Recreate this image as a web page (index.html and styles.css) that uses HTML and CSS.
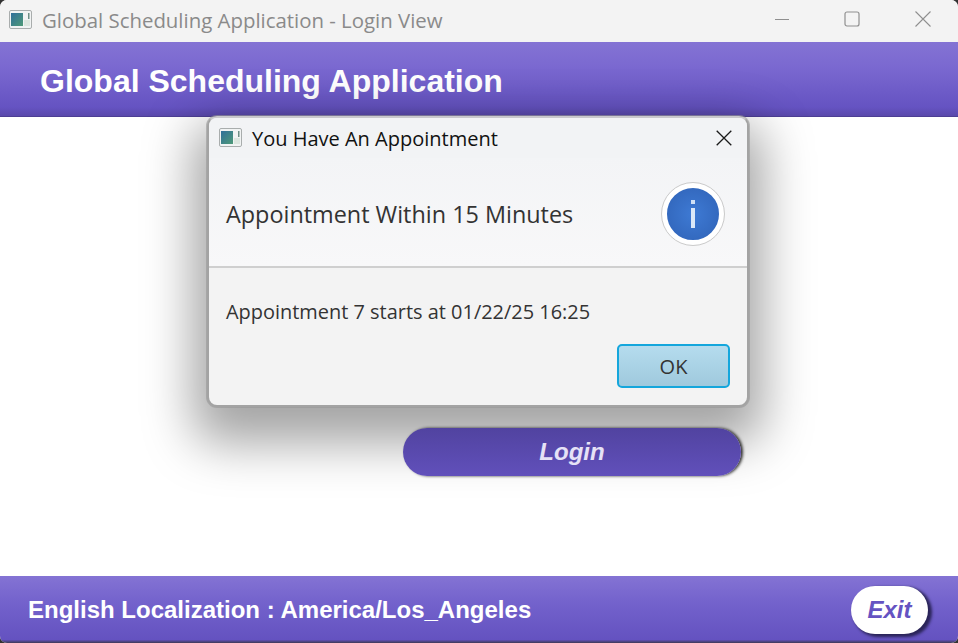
FILE: index.html

```html
<!DOCTYPE html>
<html lang="en">
<head>
    <meta charset="UTF-8">
    <title>Global Scheduling Application - Login View</title>
    <link rel="stylesheet" href="styles.css">
</head>
<body>

    <div class="window">
        <div class="titlebar">
            <svg class="app-icon" width="23" height="19" viewBox="0 0 23 19">
                <defs>
                    <linearGradient id="iconFill" x1="0" y1="0" x2="1" y2="1">
                        <stop offset="0" stop-color="#2f6f9a"/>
                        <stop offset="1" stop-color="#4f9a78"/>
                    </linearGradient>
                </defs>
                <rect x="0.5" y="0.5" width="22" height="18" rx="1.5" fill="#f1f3f3" stroke="#a9adad"/>
                <rect x="2" y="3" width="12" height="13" fill="url(#iconFill)"/>
                <rect x="15" y="10" width="6" height="6" fill="#dce6df"/>
                <rect x="19" y="3" width="1.5" height="6" fill="#6f8f86"/>
            </svg>
            <span class="window-title">Global Scheduling Application - Login View</span>
            <div class="window-controls">
                <svg width="16" height="16" viewBox="0 0 16 16"><path d="M2 8.5H17" stroke="#8f8f8f" fill="none"/></svg>
                <svg width="16" height="16" viewBox="0 0 16 16"><rect x="1" y="1" width="14" height="14" rx="2" stroke="#8f8f8f" stroke-width="1.2" fill="none"/></svg>
                <svg width="16" height="16" viewBox="0 0 16 16"><path d="M0.5 0.5L15.5 15.5M15.5 0.5L0.5 15.5" stroke="#8f8f8f" stroke-width="1.1" fill="none"/></svg>
            </div>
        </div>

        <header class="banner">
            <h1>Global Scheduling Application</h1>
        </header>

        <main class="content">
            <button class="login-btn">Login</button>
        </main>

        <footer class="footer">
            <span class="locale">English Localization : America/Los_Angeles</span>
            <button class="exit-btn">Exit</button>
        </footer>
    </div>

    <div class="dialog">
        <div class="dialog-title">
            <svg class="app-icon" width="23" height="19" viewBox="0 0 23 19">
                <rect x="0.5" y="0.5" width="22" height="18" rx="1.5" fill="#f1f3f3" stroke="#a9adad"/>
                <rect x="2" y="3" width="12" height="13" fill="url(#iconFill)"/>
                <rect x="15" y="10" width="6" height="6" fill="#dce6df"/>
                <rect x="19" y="3" width="1.5" height="6" fill="#6f8f86"/>
            </svg>
            <span class="dialog-name">You Have An Appointment</span>
            <svg class="dialog-close" width="16" height="16" viewBox="0 0 16 16"><path d="M0.7 0.7L15.3 15.3M15.3 0.7L0.7 15.3" stroke="#1a1a1a" stroke-width="1.3" fill="none"/></svg>
        </div>
        <div class="dialog-header">
            <span class="dialog-heading">Appointment Within 15 Minutes</span>
            <div class="info-icon"><span class="info-dot"></span><span class="info-bar"></span></div>
        </div>
        <div class="dialog-body">
            <p>Appointment 7 starts at 01/22/25 16:25</p>
            <div class="dialog-actions">
                <button class="ok-btn">OK</button>
            </div>
        </div>
    </div>

</body>
</html>
```

FILE: styles.css

```css
body {
    margin: 0;
    background: #333;
    font-family: "Open Sans", "Noto Sans", sans-serif;
    overflow: hidden;
}
button {
    font-family: inherit;
    cursor: pointer;
}
.window {
    display: flex;
    flex-direction: column;
    width: 958px;
    height: 643px;
    background: #fff;
    border-radius: 7px;
    overflow: hidden;
}
.titlebar {
    display: flex;
    align-items: center;
    height: 42px;
    padding: 0 27px 2px 9px;
    background: #f3f3f3;
    box-sizing: border-box;
}
.app-icon {
    flex-shrink: 0;
    margin-top: -2px;
}
.window-title {
    margin-left: 10px;
    font-size: 20.4px;
    color: #8a8a8a;
}
.window-controls {
    display: flex;
    gap: 55px;
    margin: -2px 0 0 auto;
}
.banner {
    display: flex;
    align-items: center;
    height: 75px;
    padding-left: 40px;
    box-sizing: border-box;
    background: linear-gradient(#8473d4, #7a68d0 35%, #6553c2 88%, #5a49ac);
    border-bottom: 1px solid #4d3f94;
}
.banner h1 {
    margin: 5px 0 0;
    font-family: "Liberation Sans", Arial, sans-serif;
    font-size: 32px;
    color: #fff;
}
.content {
    flex: 1;
    display: flex;
    justify-content: flex-start;
    padding: 311px 0 0 403px;
    box-sizing: border-box;
}
/* sits above the dialog shadow so the gradient stays true */
.login-btn {
    position: relative;
    z-index: 1;
    width: 338px;
    height: 48px;
    border: none;
    border-radius: 24px;
    background: linear-gradient(#5143a0, #6150bb);
    box-shadow: 2px 0 3px rgba(0, 0, 0, 0.8);
    font-family: "Liberation Sans", Arial, sans-serif;
    font-size: 24px;
    font-weight: bold;
    font-style: italic;
    color: #e6e2f6;
}
.footer {
    display: flex;
    align-items: center;
    justify-content: space-between;
    height: 67px;
    padding: 0 30px 0 28px;
    box-sizing: border-box;
    background: linear-gradient(#8473d4, #7362cc 40%, #6452c0 95%, #3e3a55);
}
.locale {
    margin-top: 1px;
    font-family: "Liberation Sans", Arial, sans-serif;
    font-size: 24px;
    font-weight: bold;
    color: #fff;
}
.exit-btn {
    width: 77px;
    height: 48px;
    border: none;
    border-radius: 24px;
    background: #fff;
    box-shadow: 3px 2px 3px 1px #2a2458;
    font-family: "Liberation Sans", Arial, sans-serif;
    font-size: 24px;
    font-weight: bold;
    font-style: italic;
    color: #6553c2;
}
.dialog {
    position: absolute;
    left: 207px;
    top: 116px;
    width: 542px;
    height: 291px;
    box-sizing: border-box;
    display: flex;
    flex-direction: column;
    border: 2px solid #a3a3a3;
    border-top-color: #c9c9cc;
    border-radius: 10px;
    background: #f3f3f3;
    box-shadow: 0 0 0 1px rgba(150, 150, 150, 0.6), 0 22px 50px 14px rgba(0, 0, 0, 0.36);
}
.dialog-title {
    display: flex;
    align-items: center;
    height: 40px;
    padding: 0 15px 0 10px;
    box-sizing: border-box;
    border-radius: 8px 8px 0 0;
    background: #f2f3f5;
}
.dialog-name {
    margin-left: 10px;
    font-size: 20px;
    color: #111;
}
.dialog-close {
    margin-left: auto;
}
.dialog-header {
    display: flex;
    align-items: center;
    justify-content: space-between;
    height: 110px;
    padding: 3px 23px 0 17px;
    box-sizing: border-box;
    background: linear-gradient(#f3f4f6, #f8f8f9);
    border-bottom: 2px solid #cfcfcf;
}
.dialog-heading {
    font-size: 23.4px;
    color: #333;
}
.info-icon {
    position: relative;
    width: 52px;
    height: 52px;
    border: 5px solid #fff;
    outline: 1px solid #cbcbcb;
    border-radius: 50%;
    background: radial-gradient(circle, #3e7ad4, #2f62b6);
}
.info-dot {
    position: absolute;
    left: 24px;
    top: 12px;
    width: 4px;
    height: 4px;
    background: #cfe0f6;
}
.info-bar {
    position: absolute;
    left: 24px;
    top: 20px;
    width: 4px;
    height: 20px;
    background: #dbe8f8;
}
.dialog-body {
    flex: 1;
    padding: 0 17px;
}
.dialog-body p {
    margin: 30px 0 0;
    font-size: 19.95px;
    line-height: 28px;
    color: #333;
}
.dialog-actions {
    display: flex;
    justify-content: flex-end;
    margin-top: 18px;
}
.ok-btn {
    width: 113px;
    height: 44px;
    border: 2px solid #14a6dc;
    border-radius: 5px;
    background: linear-gradient(#b5dcee, #9fc9dd);
    font-size: 20px;
    color: #333;
}
```
